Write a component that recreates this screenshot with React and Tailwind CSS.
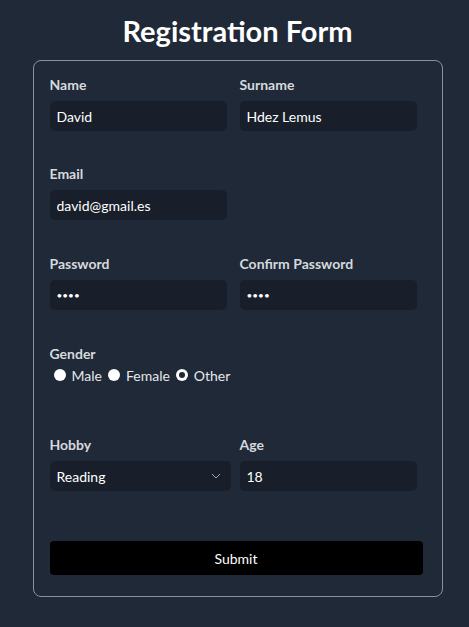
import React, { useState } from 'react';

const Field = ({ label, children, className = '' }) => (
  <div className={className}>
    <label className="block text-[14px] leading-5 font-bold text-[#d6d9de] mb-[6px]">{label}</label>
    {children}
  </div>
);

const inputCls =
  'w-[177px] h-[30px] px-[7px] rounded-[5px] bg-[#181f2a] text-white text-[14px] outline-none border-none';

const Radio = ({ checked, label, onClick }) => (
  <button type="button" onClick={onClick} className="flex items-center gap-[6px] text-[14px] text-[#e5e7eb]">
    <span className="w-3 h-3 rounded-full bg-white flex items-center justify-center">
      {checked && <span className="w-[6px] h-[6px] rounded-full bg-[#1f2937]" />}
    </span>
    {label}
  </button>
);

const App = () => {
  const [gender, setGender] = useState('Other');

  return (
    <div className="min-h-[627px] bg-[#1f2937] pt-[12px] pl-[6px] font-['Lato',sans-serif]">
      <h1 className="text-center text-white text-[29px] leading-[38px] font-bold">Registration Form</h1>

      <form
        onSubmit={(e) => e.preventDefault()}
        className="mx-auto mt-[10px] w-[410px] border border-[#8b919a] rounded-[8px] pl-[16px] pr-[19px] pt-[14px] pb-[21px]"
      >
        <div className="flex gap-[13px]">
          <Field label="Name">
            <input className={inputCls} defaultValue="David" />
          </Field>
          <Field label="Surname">
            <input className={inputCls} defaultValue="Hdez Lemus" />
          </Field>
        </div>

        <Field label="Email" className="mt-[33px]">
          <input className={inputCls} defaultValue="david@gmail.es" />
        </Field>

        <div className="flex gap-[13px] mt-[34px]">
          <Field label="Password">
            <input type="password" className={`${inputCls} !text-[10px]`} defaultValue="1234" />
          </Field>
          <Field label="Confirm Password">
            <input type="password" className={`${inputCls} !text-[10px]`} defaultValue="1234" />
          </Field>
        </div>

        <div className="mt-[34px]">
          <label className="block text-[14px] leading-5 font-bold text-[#d6d9de]">Gender</label>
          <div className="flex items-center gap-[6px] pl-[4px] h-[22px]">
            {['Male', 'Female', 'Other'].map((g) => (
              <Radio key={g} label={g} checked={gender === g} onClick={() => setGender(g)} />
            ))}
          </div>
        </div>

        <div className="flex gap-[9px] mt-[49px]">
          <Field label="Hobby">
            <div className="relative w-[181px] h-[30px] rounded-[5px] bg-[#181f2a] flex items-center px-[7px] text-white text-[14px]">
              Reading
              <svg className="absolute right-[10px] top-[12px]" width="10" height="6" viewBox="0 0 10 6" fill="none">
                <path d="M1 1l4 4 4-4" stroke="#9ca3af" strokeWidth="1" />
              </svg>
            </div>
          </Field>
          <Field label="Age">
            <input className={inputCls} defaultValue="18" />
          </Field>
        </div>

        <button
          type="submit"
          className="mt-[50px] w-full h-[34px] rounded-[4px] bg-black text-white text-[14px]"
        >
          Submit
        </button>
      </form>
    </div>
  );
};

export default App;
